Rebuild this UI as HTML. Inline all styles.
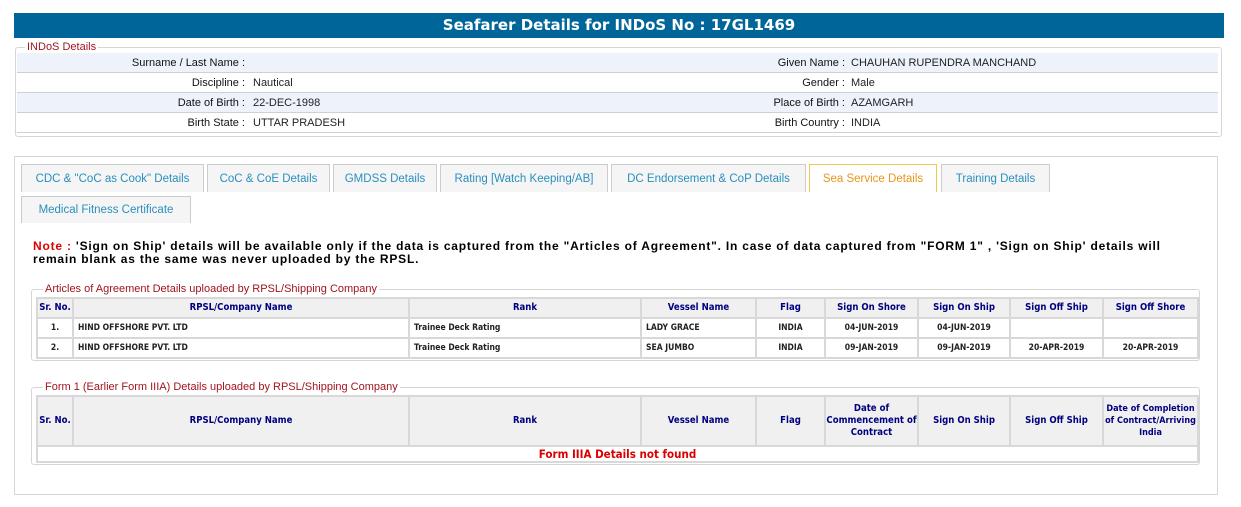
<!DOCTYPE html>
<html><head><meta charset="utf-8"><style>
*{box-sizing:border-box;margin:0;padding:0}
body{width:1241px;height:507px;background:#fff;font-family:"Liberation Sans",sans-serif;position:relative;overflow:hidden}
.abs{position:absolute}
.hdr{left:14px;top:13px;width:1210px;height:25px;background:#00669a;color:#fff;font:bold 15px "DejaVu Sans",sans-serif;text-align:center;line-height:25px}
.fs{position:absolute;border:1px solid #d6d6d6;border-radius:3px}
.lg{position:absolute;background:#fff;color:#a0141e;font-size:11px;padding:0 2px;line-height:12px}
.row{position:absolute;left:17px;width:1201px;height:20px;border-bottom:1px solid #d0d0d0;font-size:11px;line-height:20px;color:#222}
.row.a{background:#eef3fb}
.l1{position:absolute;right:973px;color:#111;white-space:nowrap}
.v1{position:absolute;left:236px}
.l2{position:absolute;right:373px;color:#111;white-space:nowrap}
.v2{position:absolute;left:834px}
.tab{position:absolute;height:28px;background:#f5f5f5;border:1px solid #ccc;border-bottom:none;color:#2a8fbd;font-size:11.5px;text-align:center;line-height:28px}
.tab.act{background:#fff;border-color:#f0c850;color:#e8961c}
.note{left:33px;top:240px;width:1180px;font:bold 12px "Liberation Sans",sans-serif;line-height:13px;color:#000;letter-spacing:0.8px;white-space:nowrap}
table{position:absolute;border-collapse:collapse;table-layout:fixed}
td,th{border:2px solid #d8d8d8;font-family:"DejaVu Sans Condensed","DejaVu Sans",sans-serif;font-size:9px}
th{background:#f0f0f0;color:#000080;font-weight:bold;height:20px;font-size:9.5px;line-height:12px}
td{height:20px;font-weight:bold;color:#222;padding-left:4px;font-size:8.5px}
td.c{text-align:center;padding:0}
</style></head><body>
<div class="abs hdr">Seafarer Details for INDoS No : 17GL1469</div>

<div class="fs" style="left:15px;top:47px;width:1207px;height:90px"></div>
<div class="lg" style="left:25px;top:41px">INDoS Details</div>
<div class="row a" style="top:53px"><span class="l1">Surname / Last Name :</span><span class="l2">Given Name :</span><span class="v2">CHAUHAN RUPENDRA MANCHAND</span></div>
<div class="row" style="top:73px"><span class="l1">Discipline :</span><span class="v1">Nautical</span><span class="l2">Gender :</span><span class="v2">Male</span></div>
<div class="row a" style="top:93px"><span class="l1">Date of Birth :</span><span class="v1">22-DEC-1998</span><span class="l2">Place of Birth :</span><span class="v2">AZAMGARH</span></div>
<div class="row" style="top:113px"><span class="l1">Birth State :</span><span class="v1">UTTAR PRADESH</span><span class="l2">Birth Country :</span><span class="v2">INDIA</span></div>

<div class="fs" style="left:14px;top:156px;width:1204px;height:339px;border-radius:0"></div>
<div class="tab" style="left:21px;top:164px;width:183px">CDC &amp; "CoC as Cook" Details</div>
<div class="tab" style="left:207px;top:164px;width:123px">CoC &amp; CoE Details</div>
<div class="tab" style="left:333px;top:164px;width:104px">GMDSS Details</div>
<div class="tab" style="left:440px;top:164px;width:168px">Rating [Watch Keeping/AB]</div>
<div class="tab" style="left:611px;top:164px;width:195px">DC Endorsement &amp; CoP Details</div>
<div class="tab act" style="left:809px;top:164px;width:128px">Sea Service Details</div>
<div class="tab" style="left:941px;top:164px;width:109px">Training Details</div>
<div class="tab" style="left:21px;top:196px;width:170px;height:27px;line-height:27px">Medical Fitness Certificate</div>

<div class="abs note"><span style="color:#d00">Note :</span> 'Sign on Ship' details will be available only if the data is captured from the "Articles of Agreement". In case of data captured from "FORM 1" , 'Sign on Ship' details will<br>remain blank as the same was never uploaded by the RPSL.</div>

<div class="fs" style="left:31px;top:289px;width:1169px;height:72px"></div>
<div class="lg" style="left:43px;top:283px">Articles of Agreement Details uploaded by RPSL/Shipping Company</div>
<table style="left:36px;top:297px;width:1161px">
<colgroup><col style="width:36px"><col style="width:336px"><col style="width:232px"><col style="width:115px"><col style="width:69px"><col style="width:93px"><col style="width:92px"><col style="width:93px"><col style="width:95px"></colgroup>
<tr><th>Sr. No.</th><th>RPSL/Company Name</th><th>Rank</th><th>Vessel Name</th><th>Flag</th><th>Sign On Shore</th><th>Sign On Ship</th><th>Sign Off Ship</th><th>Sign Off Shore</th></tr>
<tr><td class="c">1.</td><td>HIND OFFSHORE PVT. LTD</td><td>Trainee Deck Rating</td><td>LADY GRACE</td><td class="c">INDIA</td><td class="c">04-JUN-2019</td><td class="c">04-JUN-2019</td><td></td><td></td></tr>
<tr><td class="c">2.</td><td>HIND OFFSHORE PVT. LTD</td><td>Trainee Deck Rating</td><td>SEA JUMBO</td><td class="c">INDIA</td><td class="c">09-JAN-2019</td><td class="c">09-JAN-2019</td><td class="c">20-APR-2019</td><td class="c">20-APR-2019</td></tr>
</table>

<div class="fs" style="left:31px;top:387px;width:1169px;height:78px"></div>
<div class="lg" style="left:43px;top:381px">Form 1 (Earlier Form IIIA) Details uploaded by RPSL/Shipping Company</div>
<table style="left:36px;top:395px;width:1161px">
<colgroup><col style="width:36px"><col style="width:336px"><col style="width:232px"><col style="width:115px"><col style="width:69px"><col style="width:93px"><col style="width:92px"><col style="width:93px"><col style="width:95px"></colgroup>
<tr><th style="height:50px">Sr. No.</th><th>RPSL/Company Name</th><th>Rank</th><th>Vessel Name</th><th>Flag</th><th>Date of Commencement of Contract</th><th>Sign On Ship</th><th>Sign Off Ship</th><th style="font-size:9px">Date of Completion of Contract/Arriving India</th></tr>
<tr><td colspan="9" class="c" style="height:16px;color:#d00;font-size:11.5px;line-height:12px">Form IIIA Details not found</td></tr>
</table>
</body></html>
